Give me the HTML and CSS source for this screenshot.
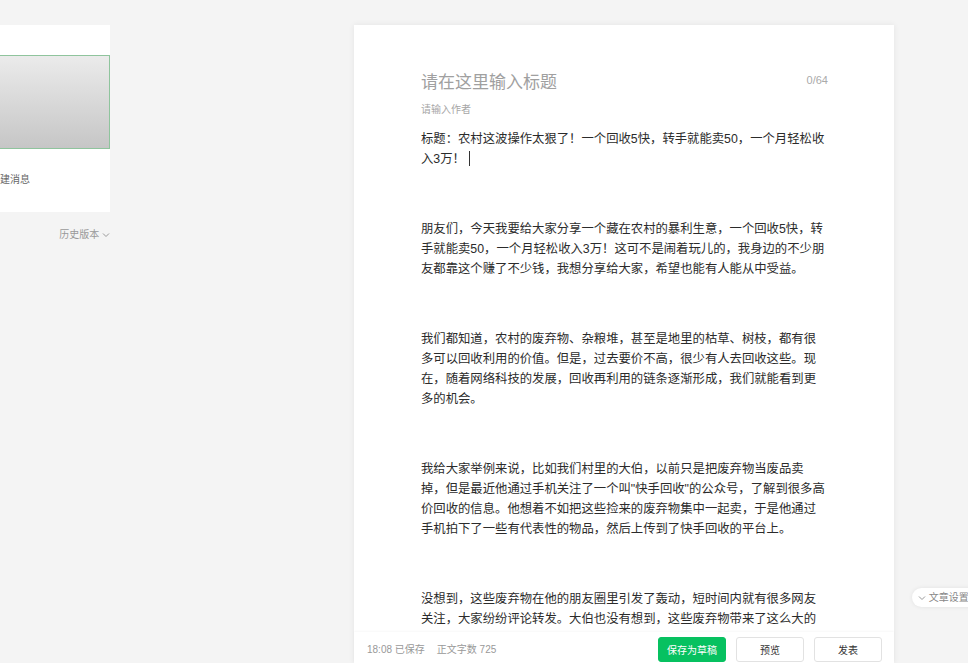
FILE: index.html
```html
<!DOCTYPE html>
<html lang="zh-CN">
<head>
	<meta charset="UTF-8" />
	<meta name="viewport" content="width=device-width, initial-scale=1.0" />
	<title>编辑图文</title>
	<link rel="stylesheet" href="styles.css">
</head>
<body>

	<div class="page">
		<div class="side">
			<div class="side__card">
				<div class="side__cover"></div>
				<div class="side__caption">新建消息</div>
			</div>
			<div class="side__history">
				历史版本
				<svg class="chevron" width="8" height="6" viewBox="0 0 8 6"><path d="M1 1.5 L4 4.5 L7 1.5" fill="none" stroke="#999" stroke-width="1"/></svg>
			</div>
		</div>

		<div class="editor">
			<div class="editor__body">
				<div class="editor__title-row">
					<span class="editor__title">请在这里输入标题</span>
					<span class="editor__count">0/64</span>
				</div>
				<div class="editor__author">请输入作者</div>

				<div class="editor__content">
					<p>标题：农村这波操作太狠了！一个回收5快，转手就能卖50，一个月轻松收入3万！<span class="editor__caret"></span></p>
					<p>朋友们，今天我要给大家分享一个藏在农村的暴利生意，一个回收5快，转手就能卖50，一个月轻松收入3万！这可不是闹着玩儿的，我身边的不少朋友都靠这个赚了不少钱，我想分享给大家，希望也能有人能从中受益。</p>
					<p>我们都知道，农村的废弃物、杂粮堆，甚至是地里的枯草、树枝，都有很多可以回收利用的价值。但是，过去要价不高，很少有人去回收这些。现在，随着网络科技的发展，回收再利用的链条逐渐形成，我们就能看到更多的机会。</p>
					<p>我给大家举例来说，比如我们村里的大伯，以前只是把废弃物当废品卖掉，但是最近他通过手机关注了一个叫"快手回收"的公众号，了解到很多高价回收的信息。他想着不如把这些捡来的废弃物集中一起卖，于是他通过手机拍下了一些有代表性的物品，然后上传到了快手回收的平台上。</p>
					<p>没想到，这些废弃物在他的朋友圈里引发了轰动，短时间内就有很多网友关注，大家纷纷评论转发。大伯也没有想到，这些废弃物带来了这么大的</p>
				</div>
			</div>

			<div class="editor__bar">
				<div class="editor__status">
					<span>18:08 已保存</span>
					<span>正文字数 725</span>
				</div>
				<div class="editor__actions">
					<button class="editor__button editor__button--primary">保存为草稿</button>
					<button class="editor__button">预览</button>
					<button class="editor__button">发表</button>
				</div>
			</div>
		</div>
	</div>

	<div class="settings-tab">
		<svg class="chevron" width="8" height="6" viewBox="0 0 8 6"><path d="M1 1.5 L4 4.5 L7 1.5" fill="none" stroke="#999" stroke-width="1"/></svg>
		文章设置
	</div>

</body>
</html>
```

FILE: styles.css
```css
* {
	box-sizing: border-box;
}

html {
	margin: 0px;
	padding: 0px;
}

body {
	margin: 0px;
	padding: 0px;
	background-color: #f4f4f4;
	font-family: "Liberation Sans", "Noto Sans CJK SC", sans-serif;
	color: #333333;
	height: 663px;
	overflow: hidden;
}

.page {
	display: flex;
	align-items: flex-start;
	padding-top: 25px;
}

/* left column, partly scrolled out of view */
.side {
	flex: none;
	width: 110px;
}

.side__card {
	width: 240px;
	margin-left: -130px;
	padding-top: 30px;
	padding-bottom: 25px;
	background-color: #ffffff;
}

.side__cover {
	height: 94px;
	border: 1px solid #8fc49d;
	background: linear-gradient(to bottom, #ebebeb, #c6c6c6);
}

.side__caption {
	margin-top: 24px;
	padding-left: 120px;
	font-size: 10px;
	line-height: 14px;
	color: #666666;
}

.side__history {
	margin-top: 16px;
	text-align: right;
	font-size: 10px;
	line-height: 14px;
	color: #999999;
}

.chevron {
	vertical-align: middle;
}

/* editor */
.editor {
	flex: none;
	width: 540px;
	height: 638px;
	margin-left: 244px;
	display: flex;
	flex-direction: column;
	background-color: #ffffff;
	box-shadow: 0 0 6px rgba(0, 0, 0, 0.07);
}

.editor__body {
	flex: 1;
	overflow: hidden;
	padding: 43px 0px 0px 67px;
}

.editor__title-row {
	width: 407px;
	display: flex;
	justify-content: space-between;
	align-items: center;
	height: 24px;
}

.editor__title {
	font-size: 17px;
	color: #a0a0a0;
}

.editor__count {
	font-size: 11px;
	color: #aaaaaa;
}

.editor__author {
	margin-top: 10px;
	font-size: 10px;
	line-height: 16px;
	color: #a6a6a6;
}

.editor__content {
	margin-top: 11px;
	width: 405.5px;
	font-size: 12.35px;
	line-height: 20px;
	color: #2b2b2b;
}

.editor__content p {
	margin: 0px 0px 50px 0px;
}

.editor__content p:last-child {
	margin-bottom: 0px;
}

.editor__caret {
	display: inline-block;
	width: 1px;
	height: 15px;
	margin-left: 4px;
	background-color: #333333;
	vertical-align: -3px;
}

.editor__bar {
	flex: none;
	height: 31px;
	display: flex;
	justify-content: space-between;
	padding: 5px 12px 0px 13px;
	background-color: #ffffff;
	box-shadow: 0 -1px 2px rgba(0, 0, 0, 0.03);
}

.editor__status {
	display: flex;
	gap: 12px;
	font-size: 10px;
	line-height: 25px;
	color: #999999;
}

.editor__actions {
	display: flex;
	gap: 10px;
}

.editor__button {
	width: 68px;
	height: 25px;
	padding: 0px;
	border: 1px solid #e2e2e2;
	border-radius: 3px;
	background-color: #ffffff;
	font-family: inherit;
	font-size: 10px;
	color: #333333;
}

.editor__button--primary {
	border-color: #07c160;
	background-color: #07c160;
	color: #ffffff;
}

/* floating tab on the right edge */
.settings-tab {
	position: absolute;
	left: 912px;
	top: 588px;
	width: 70px;
	height: 19px;
	padding-left: 6px;
	font-size: 10px;
	line-height: 19px;
	color: #888888;
	background-color: #ffffff;
	border-radius: 10px 0px 0px 10px;
	box-shadow: 0 0 4px rgba(0, 0, 0, 0.08);
}
```
